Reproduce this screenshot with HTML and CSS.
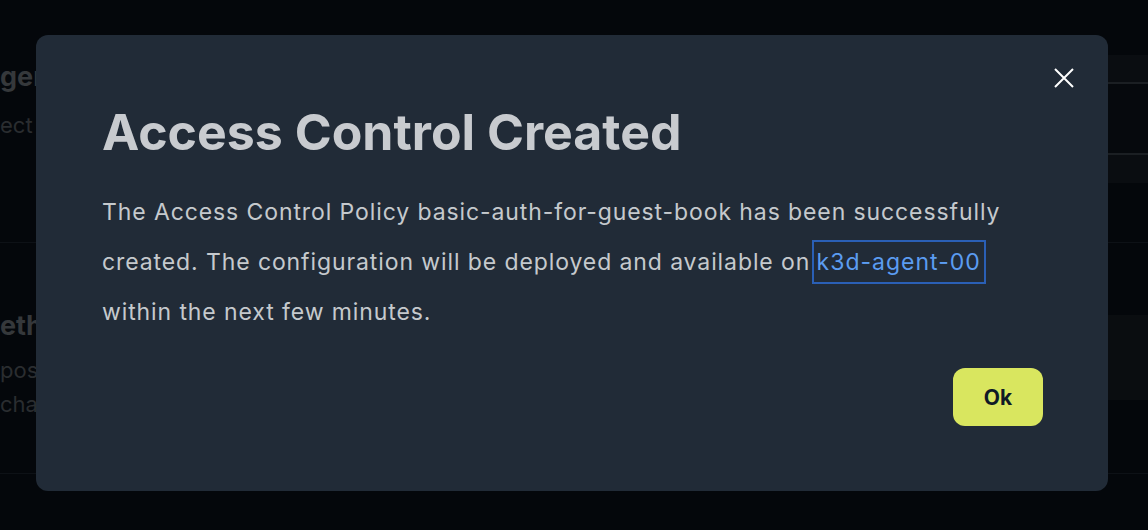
FILE: index.html
```html
<!DOCTYPE html>
<html lang="en">
<head>
<meta charset="utf-8">
<title>Access Control Created</title>
<link rel="stylesheet" href="styles.css">
</head>
<body>
<div class="page">
  <section class="section section-one">
    <div class="info">
      <h2 class="info-title">ger</h2>
      <p class="info-text">ect</p>
    </div>
    <div class="panel panel-table">
      <div class="table-head"></div>
      <div class="table-body"></div>
      <div class="table-foot"></div>
    </div>
  </section>
  <section class="section section-two">
    <div class="info">
      <h2 class="info-title">eth</h2>
      <p class="info-text">pose<br>cha</p>
    </div>
    <div class="panel panel-box"></div>
  </section>
</div>

<div class="overlay">
  <div class="modal" role="dialog">
    <button class="close" aria-label="Close">
      <svg width="20" height="20" viewBox="0 0 20 20"><path d="M1 1 L19 19 M19 1 L1 19" stroke="#ffffff" stroke-width="2" fill="none"/></svg>
    </button>
    <h1 class="modal-title">Access Control Created</h1>
    <p class="modal-text">The Access Control Policy basic-auth-for-guest-book has been successfully created. The configuration will be deployed and available on <a class="agent-link" href="#">k3d-agent-00</a> within the next few minutes.</p>
    <div class="actions">
      <button class="ok">Ok</button>
    </div>
  </div>
</div>
</body>
</html>
```

FILE: styles.css
```css
* { box-sizing: border-box; }
html, body {
  margin: 0;
  padding: 0;
  width: 1148px;
  height: 530px;
  overflow: hidden;
  background: #04070b;
  font-family: Inter, "Noto Sans", sans-serif;
}
.page {
  display: flex;
  flex-direction: column;
}
.section {
  display: flex;
  justify-content: space-between;
  border-bottom: 1px solid #0d1116;
}
.section-one { height: 243px; }
.section-two { height: 231px; }
.info {
  margin-left: 0;
}
.info-title {
  margin: 60px 0 0;
  font-size: 27px;
  font-weight: 700;
  color: #35383b;
  line-height: 34px;
}
.info-text {
  margin: 14px 0 0;
  font-size: 22px;
  color: #2a2d30;
  line-height: 34px;
}
.section-two .info-title { margin-top: 66px; }
.section-two .info-text { margin-top: 10px; }
.panel {
  width: 200px;
}
.panel-table {
  margin-top: 55px;
  height: 128px;
  display: flex;
  flex-direction: column;
  background: #0a0d11;
}
.table-head { height: 29px; border-bottom: 2px solid #1b1f23; }
.table-body { height: 71px; background: #06090d; border-bottom: 2px solid #1b1f23; }
.table-foot { flex: 1; }
.panel-box {
  margin-top: 72px;
  height: 85px;
  background: #0a0d10;
}

.overlay {
  position: fixed;
  inset: 0;
  padding: 35px 40px 39px 36px;
}
.modal {
  position: relative;
  height: 456px;
  background: #212b37;
  border-radius: 12px;
  padding: 68px 65px 0 66px;
  display: flex;
  flex-direction: column;
}
.close {
  position: absolute;
  top: 33px;
  right: 34px;
  width: 20px;
  height: 20px;
  padding: 0;
  border: 0;
  background: none;
  display: flex;
}
.modal-title {
  margin: 0;
  font-size: 50px;
  line-height: 58px;
  font-weight: 700;
  color: #c8cbcf;
}
.modal-text {
  margin: 26px 0 0;
  font-size: 23px;
  line-height: 50px;
  color: #c5c9cd;
  letter-spacing: 0.9px;
}
.agent-link {
  color: #5b9cf1;
  text-decoration: none;
  border: 2px solid #2a5fb5;
  padding: 6px 3px;
  margin: 0 -5px 0 -6px;
  letter-spacing: 1px;
}
.actions {
  display: flex;
  justify-content: flex-end;
  margin-top: 31px;
}
.ok {
  width: 90px;
  height: 58px;
  border: 0;
  border-radius: 12px;
  background: #d9e65f;
  color: #0f1a26;
  font-family: Inter, "Noto Sans", sans-serif;
  font-size: 21px;
  font-weight: 700;
}
```
